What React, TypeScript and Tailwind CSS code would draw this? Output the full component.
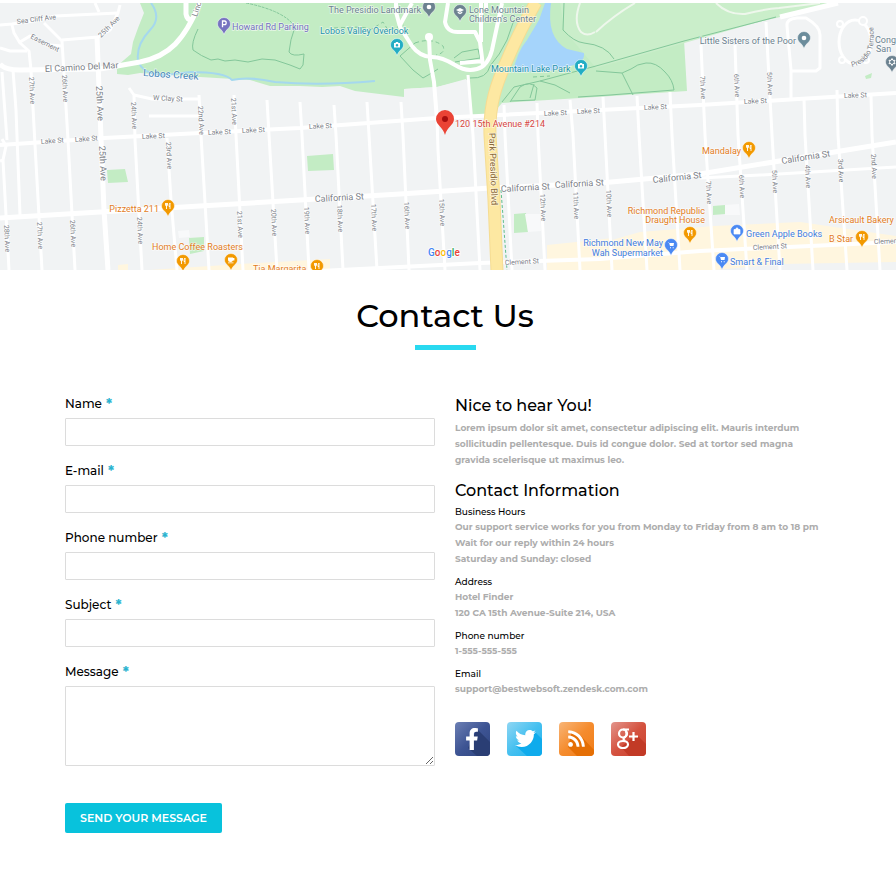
import type { ReactNode } from "react";
import { FaFacebookF, FaRss, FaTwitter } from "react-icons/fa";

type Label = {
  t: string;
  x: number;
  y: number;
  s?: number;
  c?: string;
  r?: number;
  a?: "start" | "middle" | "end";
};

const STREET = "#7b8087";
const ORANGE = "#e37d1e";
const BLUE = "#3f7de0";
const SLATE = "#6c8290";
const TEAL = "#2592ab";

const minorStreets = [
  "M0 161L3 160L6 146L2 139M3 160L6 215L9 270",
  "M2 72L7 140M13 70L16 110L20 215",
  "M12 25L14 33L20 43L29 51L31 70L35 145L42 270",
  "M0 48L10 51L27 51M20 42L30 36L40 41L50 45L62 46",
  "M44 23L62 41L68 140L75 270",
  "M62 40L98 37L110 30L118 13L120 5",
  "M95 3L99 12",
  "M129 88L134 95L135 140L142 270",
  "M134 95L152 99L199 99M149 116L199 116",
  "M167 138L171 200L177 270",
  "M199 95L201 135L209 270",
  "M234 95L236 135L243 270",
  "M267 100L269 135L277 270",
  "M300 102L302 135L309 270",
  "M334 105L336 135L343 270",
  "M367 102L369 135L377 270",
  "M401 102L403 135L409 270",
  "M437 118L438 150L445 270",
  "M468 75L473 135L480 270",
  "M504 105L505 135L512 270",
  "M537 103L538 135L545 270",
  "M570 100L573 135L580 270",
  "M603 97L605 135L612 270",
  "M637 96L639 135L647 270",
  "M670 92L672 135L680 270",
  "M701 45L705 135L714 270",
  "M735 45L738 135L747 270",
  "M766 22L772 135L780 270",
  "M791 98L791 70L787 26Q786 19 797 18L806 18Q820 26 820 35L820 68L816 71L791 71",
  "M804 98L805 135L813 270",
  "M837 90L838 135L847 270",
  "M871 95L872 135L880 270",
  "M700 178L760 175L896 167",
];

const mainStreets = [
  "M0 145L104 138L200 133L300 128L437 118L600 110L700 105L896 93",
  "M300 272L400 267L480 263L600 259L700 251L896 242",
  "M429 38L430 60L434 82L437 120",
  "M396 3L396 12L400 27L412 46Q420 57 432 57Q442 57 455 65Q466 72 477 69Q488 66 492 50L502 3",
  "M400 25L412 3M448 3L445 22Q447 33 460 32L475 32L480 42L483 66M481 42L481 3M460 63L484 61",
  "M486 3L486 10",
];

const trails = [
  "M198 29Q191 43 193 50Q201 56 211 60L218 59L225 61L235 60L248 62L262 59L275 60L290 65L300 69",
  "M295 27Q290 40 289 52Q292 57 304 54L303 65L300 69",
  "M400 56L413 70L423 78Q432 73 438 69M400 56L415 43",
  "M454 58L462 52L478 49L480 58L455 62M470 78Q487 79 490 66Q500 55 507 40L514 20",
  "M502 102L514 87L540 81L596 66L684 41L776 17",
  "M510 102L520 87Q530 80 537 88L535 100L511 101M530 98L534 84M540 81L555 85L570 93",
  "M564 3L563 30Q574 42 584 43Q606 45 614 59M578 97L610 95L674 90Q673 80 665 72Q656 62 646 63Q637 64 631 69Q622 73 622 73L596 71M622 73L633 95",
];

const labels: Label[] = [
  { t: "Sea Cliff Ave", x: 17, y: 24, r: -7, s: 7 },
  { t: "Easement", x: 30, y: 38, r: 27, s: 7 },
  { t: "25th Ave", x: 101, y: 38, r: -45, s: 7 },
  { t: "El Camino Del Mar", x: 45, y: 72, r: -3, s: 9 },
  { t: "Lobos Creek", x: 143, y: 76, r: 4, s: 10, c: "#4385b8" },
  { t: "Linc", x: 197, y: 17, r: -72, s: 8 },
  { t: "W Clay St", x: 153, y: 100, r: 3, s: 7 },
  { t: "27th Ave", x: 29, y: 77, r: 87, s: 7 },
  { t: "26th Ave", x: 62, y: 75, r: 87, s: 7 },
  { t: "25th Ave", x: 96, y: 86, r: 87, s: 9 },
  { t: "24th Ave", x: 131, y: 102, r: 87, s: 7 },
  { t: "22nd Ave", x: 198, y: 106, r: 87, s: 7 },
  { t: "21st Ave", x: 231, y: 98, r: 87, s: 7 },
  { t: "Lake St", x: 41, y: 144, r: -4, s: 7 },
  { t: "Lake St", x: 75, y: 142, r: -4, s: 7 },
  { t: "Lake St", x: 142, y: 139, r: -3, s: 7 },
  { t: "Lake St", x: 208, y: 135, r: -3, s: 7 },
  { t: "Lake St", x: 242, y: 133, r: -3, s: 7 },
  { t: "Lake St", x: 309, y: 129, r: -3, s: 7 },
  { t: "Lake St", x: 544, y: 116, r: -3, s: 7 },
  { t: "Lake St", x: 577, y: 114, r: -3, s: 7 },
  { t: "Lake St", x: 644, y: 110, r: -3, s: 7 },
  { t: "Lake St", x: 744, y: 104, r: -3, s: 7 },
  { t: "Lake St", x: 844, y: 98, r: -2, s: 7 },
  { t: "7th Ave", x: 700, y: 76, r: 87, s: 7 },
  { t: "6th Ave", x: 734, y: 74, r: 87, s: 7 },
  { t: "5th Ave", x: 767, y: 72, r: 87, s: 7 },
  { t: "25th Ave", x: 99, y: 146, r: 87, s: 9 },
  { t: "23rd Ave", x: 166, y: 142, r: 87, s: 7 },
  { t: "28th Ave", x: 4, y: 225, r: 87, s: 7 },
  { t: "27th Ave", x: 37, y: 222, r: 87, s: 7 },
  { t: "26th Ave", x: 70, y: 220, r: 87, s: 7 },
  { t: "24th Ave", x: 137, y: 217, r: 87, s: 7 },
  { t: "21st Ave", x: 237, y: 211, r: 87, s: 7 },
  { t: "20th Ave", x: 271, y: 209, r: 87, s: 7 },
  { t: "19th Ave", x: 304, y: 207, r: 87, s: 7 },
  { t: "18th Ave", x: 337, y: 205, r: 87, s: 7 },
  { t: "17th Ave", x: 371, y: 204, r: 87, s: 7 },
  { t: "16th Ave", x: 404, y: 202, r: 87, s: 7 },
  { t: "15th Ave", x: 439, y: 199, r: 87, s: 7 },
  { t: "12th Ave", x: 540, y: 194, r: 87, s: 7 },
  { t: "11th Ave", x: 573, y: 192, r: 87, s: 7 },
  { t: "10th Ave", x: 606, y: 190, r: 87, s: 7 },
  { t: "7th Ave", x: 706, y: 181, r: 87, s: 7 },
  { t: "6th Ave", x: 739, y: 175, r: 87, s: 7 },
  { t: "5th Ave", x: 772, y: 170, r: 87, s: 7 },
  { t: "4th Ave", x: 805, y: 165, r: 87, s: 7 },
  { t: "3rd Ave", x: 838, y: 159, r: 87, s: 7 },
  { t: "2nd Ave", x: 871, y: 154, r: 87, s: 7 },
  { t: "California St", x: 315, y: 202, r: -3, s: 9 },
  { t: "California St", x: 501, y: 192, r: -3, s: 9 },
  { t: "California St", x: 555, y: 188, r: -3, s: 9 },
  { t: "California St", x: 653, y: 183, r: -6, s: 9 },
  { t: "California St", x: 782, y: 164, r: -9, s: 9 },
  { t: "Clement St", x: 505, y: 265, r: -3, s: 7 },
  { t: "Clement St", x: 753, y: 250, r: -3, s: 7 },
  { t: "Clemen", x: 874, y: 244, r: -2, s: 7 },
  { t: "Park Presidio Blvd", x: 489, y: 133, r: 88, s: 9, c: "#8a6a3c" },
  { t: "Howard Rd Parking", x: 232, y: 30, c: "#7470c0" },
  { t: "The Presidio Landmark", x: 421, y: 13, c: SLATE, a: "end" },
  { t: "Lone Mountain", x: 469, y: 13, c: SLATE },
  { t: "Children's Center", x: 469, y: 22, c: SLATE },
  { t: "Lobos Valley Overlook", x: 320, y: 34, c: TEAL },
  { t: "Mountain Lake Park", x: 491, y: 72, c: TEAL },
  { t: "Little Sisters of the Poor", x: 796, y: 44, c: SLATE, a: "end" },
  { t: "Cong", x: 896, y: 43, c: SLATE, a: "end" },
  { t: "San", x: 876, y: 52, c: SLATE },
  { t: "120 15th Avenue #214", x: 455, y: 127, c: "#d6463f" },
  { t: "Mandalay", x: 741, y: 154, c: ORANGE, a: "end" },
  { t: "Pizzetta 211", x: 159, y: 212, c: ORANGE, a: "end" },
  { t: "Home Coffee Roasters", x: 152, y: 250, c: ORANGE },
  { t: "Tia Margarita", x: 253, y: 272, c: ORANGE },
  { t: "Richmond Republic", x: 705, y: 214, c: ORANGE, a: "end" },
  { t: "Draught House", x: 705, y: 223, c: ORANGE, a: "end" },
  { t: "Arsicault Bakery", x: 829, y: 223, c: ORANGE },
  { t: "B Star", x: 829, y: 242, c: ORANGE },
  { t: "Richmond New May", x: 663, y: 246, c: BLUE, a: "end" },
  { t: "Wah Supermarket", x: 663, y: 256, c: BLUE, a: "end" },
  { t: "Green Apple Books", x: 746, y: 237, c: BLUE },
  { t: "Smart & Final", x: 730, y: 265, c: BLUE },
];

const fork = <path d="M-2.5 -3V-1Q-2.5 0 -1.5 0V3M-0.5 -3V-1Q-0.5 0 -1.5 0V-3M2 3V-3Q1 -2 1 0.5H2" fill="none" stroke="#fff" strokeWidth="0.9" />;
const camera = <path d="M-3 -2H-1.5L-1 -3H1L1.5 -2H3V2.5H-3ZM0 -1A1.3 1.3 0 1 0 0 1.6A1.3 1.3 0 1 0 0 -1" fill="#fff" fillRule="evenodd" />;
const cart = <path d="M-3.5 -2.5H-2L-1 1H2.5L3 -2H-1.5ZM-1 2.2h1v1h-1zM1.7 2.2h1v1h-1z" fill="#fff" />;
const bag = <path d="M-3 -1.5H3V3H-3ZM-1.5 -1.5Q0 -5 1.5 -1.5" fill="#fff" stroke="#fff" strokeWidth="0.7" />;
const cup = <path d="M-3 -2.5H2V-2H3.4V0.5H2Q1 2 -0.5 2Q-3 2 -3 -0.5ZM-3 2.6H2.5V3.2H-3Z" fill="#fff" />;
const dot = <circle r="2.3" fill="#fff" />;
const cap = <path d="M-4 -1L0 -3L4 -1L0 1ZM-2.3 0.6L0 1.8L2.3 0.6V2L0 3.2L-2.3 2Z" fill="#fff" />;
const star = <path d="M0 -3.5L1 -1.6L3 -1.7L2 0L3 1.7L1 1.6L0 3.5L-1 1.6L-3 1.7L-2 0L-3 -1.7L-1 -1.6Z" fill="none" stroke="#fff" />;
const parking = <path d="M-1.5 3.2V-3H0.5Q2.2 -3 2.2 -1.2Q2.2 0.7 0.5 0.7H-1.5" fill="none" stroke="#fff" strokeWidth="1.3" />;

const pins: { x: number; y: number; c: string; g: ReactNode }[] = [
  { x: 224, y: 24, c: "#7673c0", g: parking },
  { x: 429, y: 7, c: "#6c8290", g: dot },
  { x: 460, y: 11, c: "#6c8290", g: cap },
  { x: 397, y: 45, c: "#22adc4", g: camera },
  { x: 581, y: 66, c: "#22adc4", g: camera },
  { x: 804, y: 38, c: "#6c8d9c", g: dot },
  { x: 892, y: 62, c: "#6c8290", g: star },
  { x: 749, y: 148, c: "#f29900", g: fork },
  { x: 168, y: 206, c: "#f29900", g: fork },
  { x: 183, y: 261, c: "#f29900", g: fork },
  { x: 231, y: 260, c: "#f29900", g: cup },
  { x: 317, y: 266, c: "#f29900", g: fork },
  { x: 690, y: 233, c: "#f29900", g: fork },
  { x: 862, y: 237, c: "#f29900", g: fork },
  { x: 671, y: 245, c: "#4a89f3", g: cart },
  { x: 737, y: 231, c: "#4a89f3", g: bag },
  { x: 722, y: 259, c: "#4a89f3", g: cart },
];

function StreetMap() {
  return (
    <svg
      viewBox="0 3 896 267"
      className="block h-auto w-full font-[Roboto,sans-serif]"
      role="img"
      aria-label="Map showing 120 15th Avenue #214"
    >
      <rect y="3" width="896" height="267" fill="#f1f3f4" />
      <path d="M140 3L144 13L138 28L133 42L131 54L117 66L117 74L128 75L140 73L200 77L250 80L270 86L300 86L322 87L340 86L355 91L404 97L404 89L437 87L466 80L468 79L472 115L489 118L502 103L596 97L687 91L684 40L780 17L830 3Z" fill="#c3ecc4" />
      <path d="M560 3L564 30L596 68L776 17L830 3Z" fill="#caeeca" />
      <path d="M404 89L437 87L466 79L468 114L406 117Z" fill="#f1f3f4" />
      <path d="M107 170L125 169L128 182L108 183ZM307 156L333 154L334 170L308 171ZM189 238L204 237L204 251L190 254ZM514 214L526 213L528 232L514 233ZM713 206L725 205L725 214L713 215ZM865 76L872 73L871 78L866 79Z" fill="#c3ecc4" />
      <path d="M525 214L540 214L541 231L528 232ZM725 205L739 204L740 215L725 215ZM178 231L189 230L190 237L179 238Z" fill="#f8f9fa" />
      <path d="M118 265L128 264L128 270H118ZM150 270L240 264L330 259L330 270ZM547 245L596 240L612 238V270H547ZM612 240L640 232L714 226L800 222L896 236V262L780 264L714 270H612Z" fill="#fff6df" />
      <path d="M539 20L545 3H551Q546 38 567 49L584 53Q585 60 578 64L550 71L513 72Q517 52 527 40Z" fill="#a5d4fb" />
      <path d="M151 3Q162 18 150 30Q136 45 138 60Q142 75 165 75L190 72Q225 72 232 80Q248 76 275 82Q320 86 375 81" fill="none" stroke="#a5d8ee" strokeWidth="2" />
      <g fill="none" stroke="#83c79a" strokeWidth="1">
        {trails.map((d) => (
          <path key={d} d={d} />
        ))}
        <path d="M246 3Q285 11 295 27" strokeDasharray="3 1" />
        <path d="M334 28L360 27L372 29L383 22L388 30L404 25M415 43Q432 37 443 46Q446 53 436 55M533 77L550 76" strokeDasharray="4 3" />
        <path d="M501 190L507 270" stroke="#5fbe8c" strokeDasharray="3 2" />
      </g>
      <path d="M596 32Q613 16 635 3M716 3Q728 15 745 14Q765 9 779 8L820 3M580 3Q573 22 581 32Q587 37 595 32" fill="none" stroke="#eef7ec" strokeWidth="2" />
      <g fill="none" stroke="#fff" strokeLinejoin="round">
        <g strokeWidth="3">
          {minorStreets.map((d) => (
            <path key={d} d={d} />
          ))}
          <path d="M0 25L12 24L40 20L55 16L118 13" />
          <ellipse cx="855" cy="42" rx="16" ry="22" />
        </g>
        <g strokeWidth="4">
          {mainStreets.map((d) => (
            <path key={d} d={d} />
          ))}
        </g>
        <path d="M97 37L101 138L104 210L108 270M0 218L100 212L200 206L300 200L400 194L490 188L600 183L700 174L896 142" strokeWidth="5" />
        <path d="M0 64Q5 70 20 70L100 69L140 62C170 56 184 40 200 3M186 3V14Q187 20 192 20M780 17L838 3" strokeWidth="5" />
      </g>
      <circle cx="429" cy="37" r="4" fill="#fff" />
      <g fill="#f1f3f4" stroke="#fff" strokeWidth="2">
        <circle cx="840" cy="24" r="3" />
        <circle cx="863" cy="21" r="4" />
        <circle cx="842" cy="60" r="3" />
        <circle cx="866" cy="60" r="3" />
      </g>
      <path d="M536 2Q519 32 508 58C496 84 489 105 490 135L494 200L497 271" fill="none" stroke="#f5dc93" strokeWidth="13" />
      <path d="M536 2Q519 32 508 58C496 84 489 105 490 135L494 200L497 271" fill="none" stroke="#fde8a2" strokeWidth="11" />
      <path id="terrace" d="M852 67Q880 60 872 20" fill="none" />
      <g stroke="#fff" strokeOpacity="0.6" strokeWidth="1.5">
        {labels.map((l) => (
          <text
            key={`${l.t}-${l.x}-${l.y}`}
            x={l.x}
            y={l.y}
            fontSize={l.s ?? 9}
            fill={l.c ?? STREET}
            textAnchor={l.a ?? "start"}
            paintOrder="stroke"
            transform={l.r ? `rotate(${l.r} ${l.x} ${l.y})` : undefined}
          >
            {l.t}
          </text>
        ))}
      </g>
      <text fontSize="7" fill={STREET}>
        <textPath href="#terrace">Presidio Terrace</textPath>
      </text>
      {pins.map((p) => (
        <g key={`${p.x}-${p.y}`} transform={`translate(${p.x} ${p.y})`}>
          <path d="M-6.5 0A6.5 6.5 0 1 1 6.5 0C6.5 4 2 5 0 10.5C-2 5 -6.5 4 -6.5 0Z" fill={p.c} stroke="#fff" strokeWidth="0.5" />
          {p.g}
        </g>
      ))}
      <path d="M436 119A9 9 0 0 1 454 119C454 125 447 127 445 135C443 127 436 125 436 119Z" fill="#ea4335" />
      <circle cx="445" cy="119" r="3" fill="#a50e0e" />
      <text x="428" y="256" fontSize="10" fontWeight="500" stroke="#fff" strokeWidth="1.5" paintOrder="stroke">
        <tspan fill="#4285f4">G</tspan>
        <tspan fill="#ea4335">o</tspan>
        <tspan fill="#fbbc05">o</tspan>
        <tspan fill="#4285f4">g</tspan>
        <tspan fill="#34a853">l</tspan>
        <tspan fill="#ea4335">e</tspan>
      </text>
    </svg>
  );
}

const fields = [
  { id: "name", label: "Name", type: "text" },
  { id: "email", label: "E-mail", type: "email" },
  { id: "phone", label: "Phone number", type: "tel" },
  { id: "subject", label: "Subject", type: "text" },
];

function FieldLabel({ id, children }: { id: string; children: ReactNode }) {
  return (
    <label htmlFor={id} className="mb-1 flex h-5 items-center gap-1 text-xs font-medium">
      {children}
      <span className="text-sm leading-5 font-bold text-[#2bb3cf]">*</span>
    </label>
  );
}

const details = [
  {
    title: "Business Hours",
    lines: [
      "Our support service works for you from Monday to Friday from 8 am to 18 pm",
      "Wait for our reply within 24 hours",
      "Saturday and Sunday: closed",
    ],
  },
  { title: "Address", lines: ["Hotel Finder", "120 CA 15th Avenue-Suite 214, USA"] },
  { title: "Phone number", lines: ["1-555-555-555"] },
  { title: "Email", lines: ["support@bestwebsoft.zendesk.com.com"] },
];

const socials = [
  {
    name: "Facebook",
    from: "#6c7fb4",
    mid: "#3d5493",
    to: "#2f4580",
    shade: "#2a3e74",
    shadow: "M22 7L35 20V34H22L13 26Z",
    glyph: <FaFacebookF x={6} y={6} size={22} color="#fff" />,
  },
  {
    name: "Twitter",
    from: "#8fd6f3",
    mid: "#45c0f0",
    to: "#1fb2ee",
    shade: "#0fabec",
    shadow: "M27 9L35 17V34H20L9 24L20 20Z",
    glyph: <FaTwitter x={8} y={6} size={21} color="#fff" />,
  },
  {
    name: "RSS",
    from: "#f8b577",
    mid: "#f58c2e",
    to: "#f07c17",
    shade: "#e56f05",
    shadow: "M13 9L22 14L35 28V34H18L9 25Z",
    glyph: <FaRss x={8} y={7} size={19} color="#fff" />,
  },
  {
    name: "Google Plus",
    from: "#e3958c",
    mid: "#d4523f",
    to: "#cb4330",
    shade: "#c23a26",
    shadow: "M28 15L35 22V34H18L10 25L20 17Z",
    glyph: (
      <g fill="none" stroke="#fff" strokeWidth="2.2">
        <ellipse cx="12" cy="11.5" rx="4" ry="4" />
        <ellipse cx="12" cy="22.5" rx="5" ry="3.5" />
        <path d="M12 7.5H18M14.5 9Q17 12 14 15Q11 17 14 19" />
        <path d="M18 14.5H27M22.5 10V19" />
      </g>
    ),
  },
];

export default function App() {
  return (
    <main className="min-h-screen bg-white pt-[3px] font-[Montserrat,Inter,sans-serif] text-black">
      <StreetMap />
      <div className="mx-auto max-w-[766px] pr-[6px] pb-11">
        <header className="flex flex-col items-center pt-6">
          <h1 className="text-[32px] leading-11 font-medium">Contact Us</h1>
          <div className="mt-[7px] h-[5px] w-[61px] bg-[#29d9f0]" />
        </header>
        <div className="mt-11 grid grid-cols-2 gap-5">
          <form onSubmit={(e) => e.preventDefault()}>
            {fields.map((f) => (
              <div key={f.id} className="mb-[15px]">
                <FieldLabel id={f.id}>{f.label}</FieldLabel>
                <input
                  id={f.id}
                  type={f.type}
                  required
                  className="block h-7 w-full rounded-[1px] border border-[#dcdcdc] px-2 text-xs outline-none"
                />
              </div>
            ))}
            <FieldLabel id="message">Message</FieldLabel>
            <textarea
              id="message"
              required
              className="block h-20 w-full resize rounded-[1px] border border-[#dcdcdc] px-2 py-1 text-xs outline-none"
            />
            <button
              type="submit"
              className="mt-[37px] block h-[30px] rounded-[2px] bg-[#08c2dc] px-[15px] text-[11px] font-semibold text-white"
            >
              SEND YOUR MESSAGE
            </button>
          </form>
          <section>
            <h2 className="text-base leading-6 font-medium">Nice to hear You!</h2>
            <p className="mt-0.5 text-[9px] leading-4 font-bold text-[#adadad]">
              Lorem ipsum dolor sit amet, consectetur adipiscing elit. Mauris interdum sollicitudin pellentesque. Duis id
              congue dolor. Sed at tortor sed magna gravida scelerisque ut maximus leo.
            </p>
            <h2 className="mt-[11px] text-base leading-6 font-medium">Contact Information</h2>
            <div className="mt-0.5 flex flex-col gap-2">
              {details.map((d) => (
                <div key={d.title} className="text-[9px]">
                  <h3 className="leading-[14px] font-medium">{d.title}</h3>
                  {d.lines.map((line) => (
                    <p key={line} className="leading-4 font-bold text-[#adadad]">
                      {line}
                    </p>
                  ))}
                </div>
              ))}
            </div>
            <nav aria-label="Social links" className="mt-[25px] flex gap-[17px]">
              {socials.map(({ name, from, mid, to, shade, shadow, glyph }) => (
                <a key={name} href="#" aria-label={name} className="block">
                  <svg viewBox="0 0 35 34" className="block h-[34px] w-[35px]">
                    <defs>
                      <linearGradient id={`g-${name[0]}`} x1="0" y1="0" x2="1" y2="1">
                        <stop offset="0" stopColor={from} />
                        <stop offset="0.5" stopColor={mid} />
                        <stop offset="1" stopColor={to} />
                      </linearGradient>
                      <clipPath id={`c-${name[0]}`}>
                        <rect width="35" height="34" rx="4" />
                      </clipPath>
                    </defs>
                    <g clipPath={`url(#c-${name[0]})`}>
                      <rect width="35" height="34" fill={`url(#g-${name[0]})`} />
                      <path d={shadow} fill={shade} />
                    </g>
                    {glyph}
                  </svg>
                </a>
              ))}
            </nav>
          </section>
        </div>
      </div>
    </main>
  );
}
